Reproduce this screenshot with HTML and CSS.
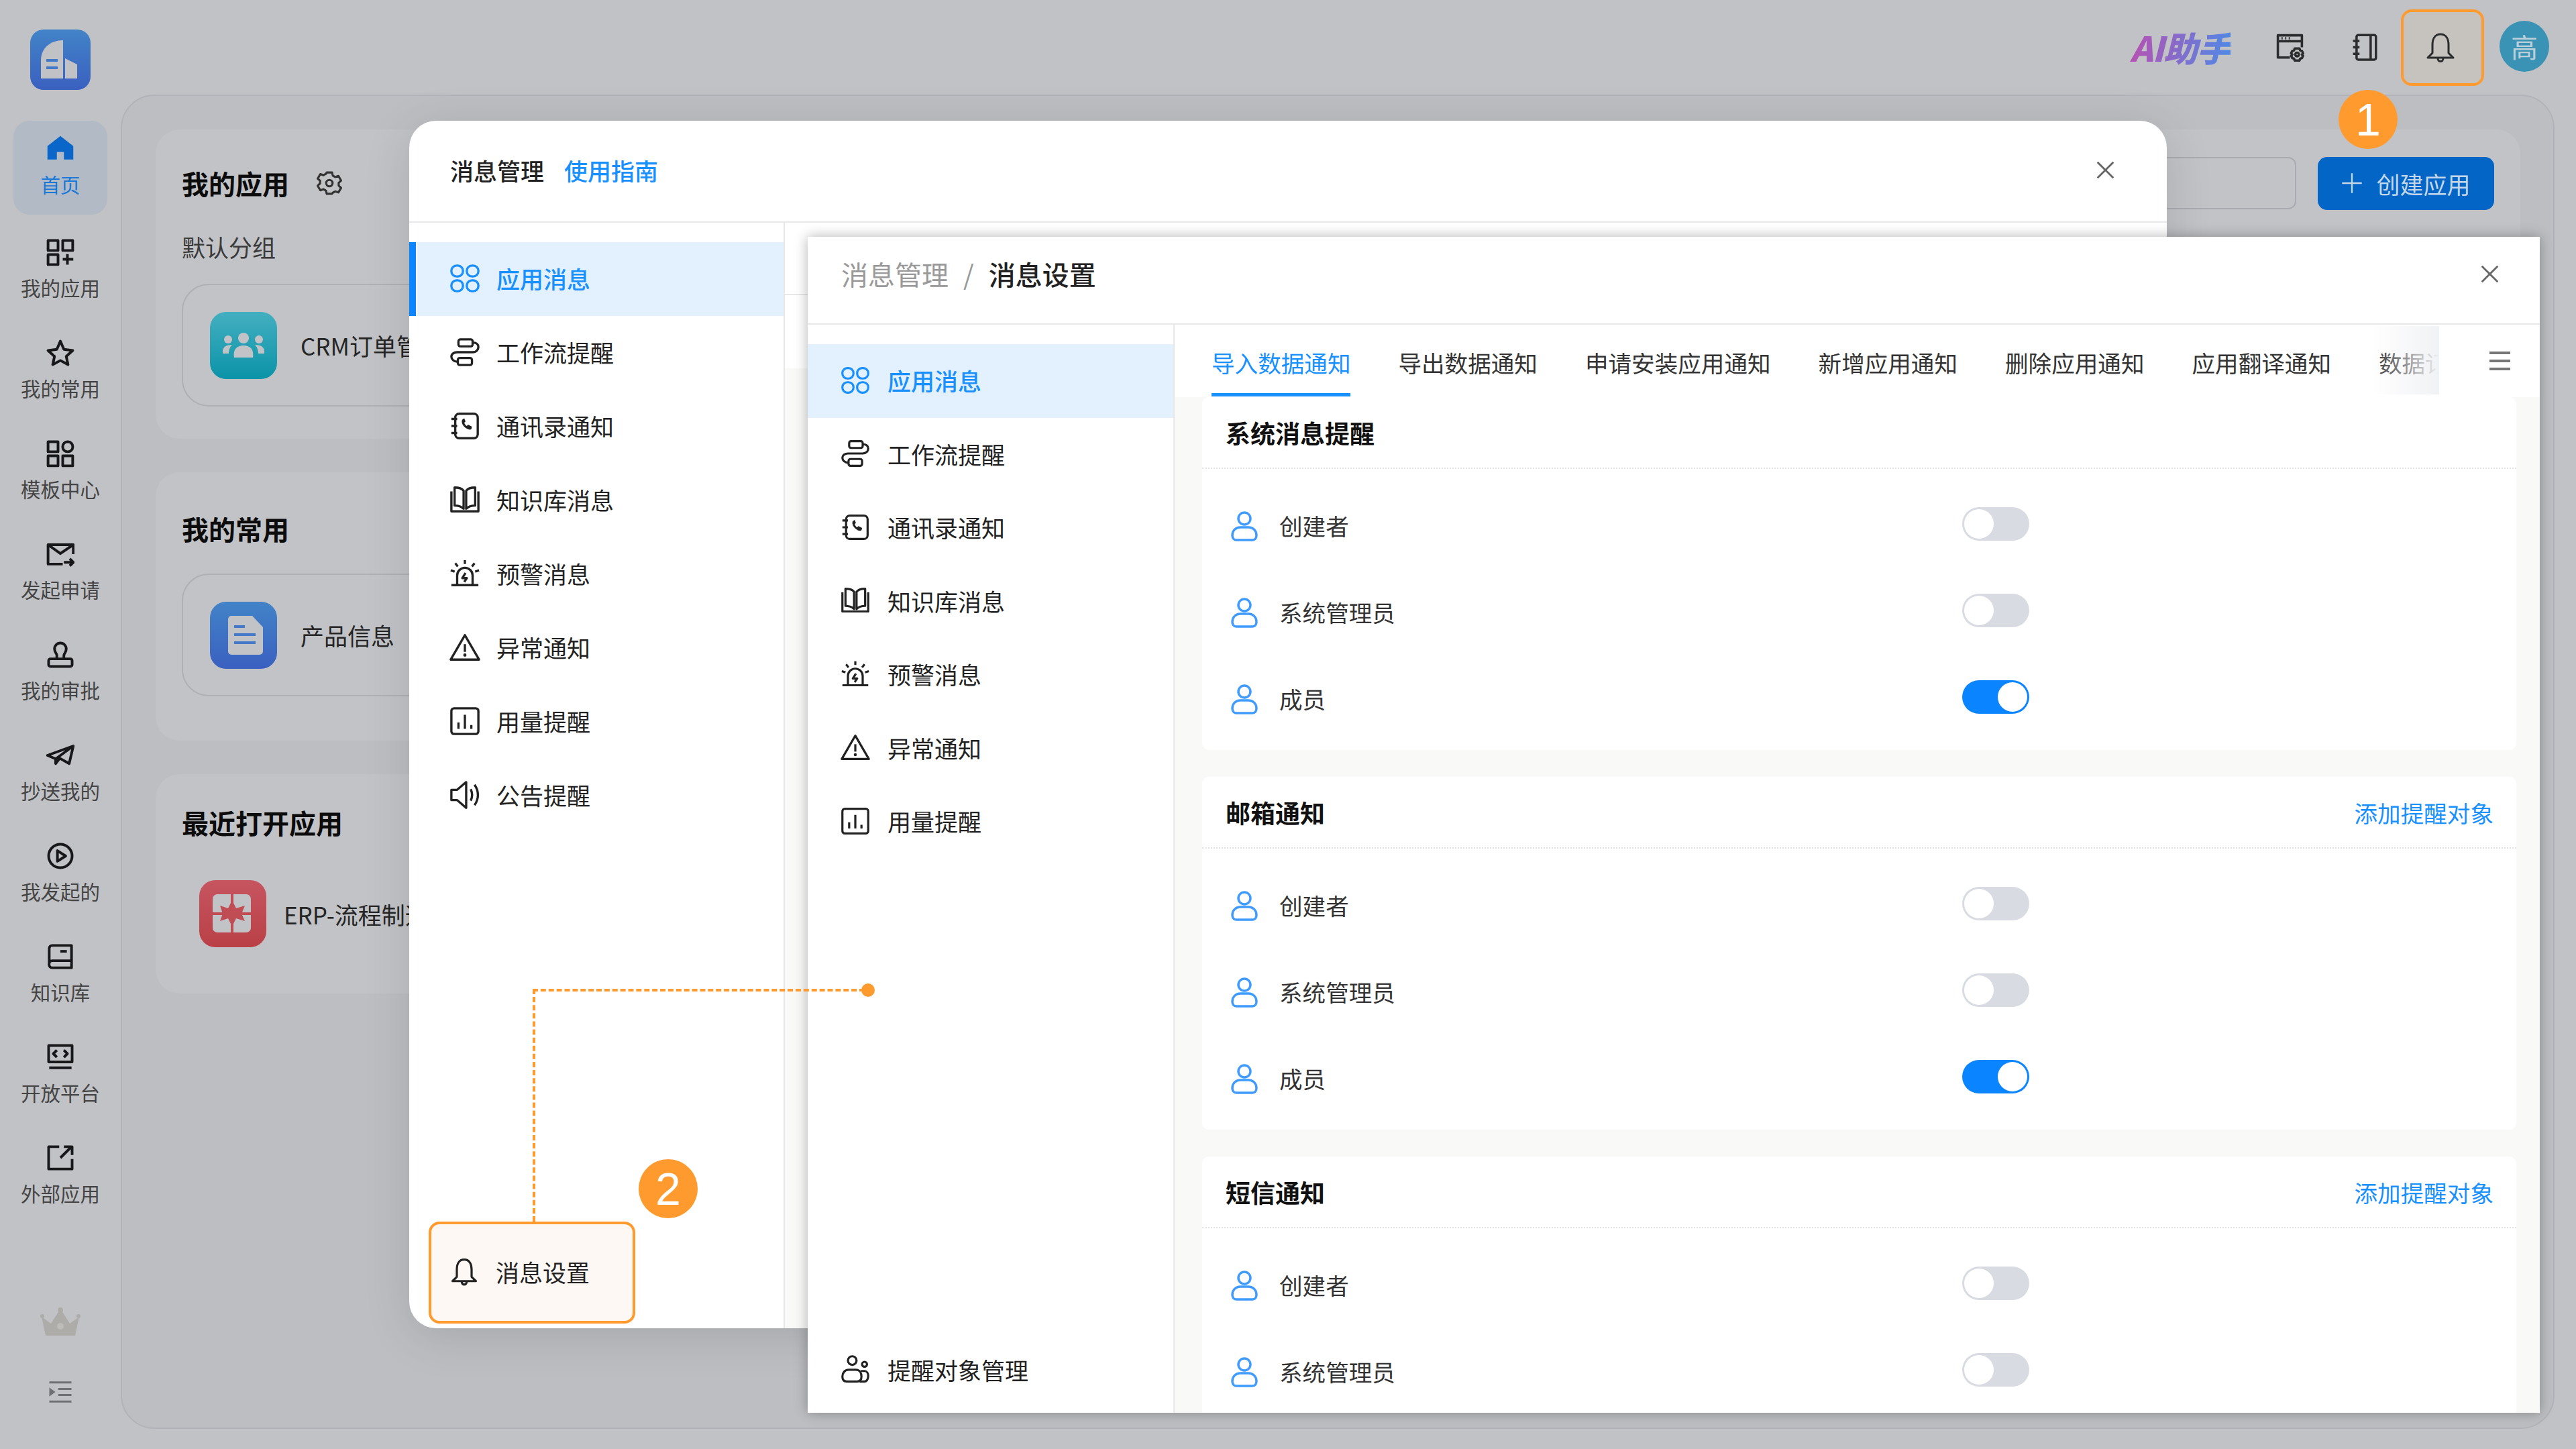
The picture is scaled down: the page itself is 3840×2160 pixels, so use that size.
FILE: index.html
```html
<!DOCTYPE html>
<html lang="zh-CN">
<head>
    <meta charset="UTF-8">
    <title>消息管理</title>
    <link rel="stylesheet" href="styles.css">
</head>
<body>
    <svg class="sprite" xmlns="http://www.w3.org/2000/svg">
        <symbol id="i-apps" viewBox="0 0 48 48"><rect x="3" y="4" width="18" height="17" rx="8"/><rect x="27" y="4" width="18" height="17" rx="8"/><rect x="3" y="27" width="18" height="17" rx="8"/><rect x="27" y="27" width="18" height="17" rx="8"/></symbol>
        <symbol id="i-flow" viewBox="0 0 48 48"><rect x="14" y="4" width="22" height="11" rx="3"/><path d="M36 9c6 0 9 3 9 7s-3 8-9 8H12c-5 0-9 3-9 7s4 8 10 8"/><rect x="13" y="33" width="22" height="11" rx="3"/></symbol>
        <symbol id="i-contact" viewBox="0 0 48 48"><rect x="9" y="5" width="35" height="38" rx="6"/><path d="M3 13h9M3 24h9M3 35h9"/><path class="solid" d="M20 14c-2 3 0 8 3 11s8 6 11 4l1-4-6-3-2 2c-2-1-3-3-4-5l2-2-2-5z"/></symbol>
        <symbol id="i-book" viewBox="0 0 48 48"><path d="M3 11v31h42V11"/><path d="M8 5c5 0 11 1 14 5v28c-3-3-9-5-14-5z"/><path d="M40 5c-5 0-11 1-14 5v28c3-3 9-5 14-5z"/></symbol>
        <symbol id="i-alarm" viewBox="0 0 48 48"><path d="M12 42V27a12 12 0 0 1 24 0v15M3 42h42"/><path d="M25 23l-5 8h7l-4 6"/><path d="M24 3v6M9 8l4 5M39 8l-4 5M2 19l6 2M46 19l-6 2"/></symbol>
        <symbol id="i-warn" viewBox="0 0 48 48"><path d="M24 5L2 43h44z"/><path d="M24 19v12"/><circle class="solid" cx="24" cy="36" r="2.500"/></symbol>
        <symbol id="i-usage" viewBox="0 0 48 48"><rect x="3" y="4" width="42" height="40" rx="4"/><path d="M14 36v-10M24 36V14M34 36v-6"/></symbol>
        <symbol id="i-speaker" viewBox="0 0 48 48"><path d="M3 16v16h9l14 12V4L12 16z"/><path d="M33 15c3 6 3 12 0 18M39 8c7 10 7 22 0 32"/></symbol>
        <symbol id="i-bell" viewBox="0 0 48 48"><path d="M24 4c-9 0-12 8-12 16v12l-7 7h38l-7-7V20c0-8-3-16-12-16z"/><path d="M20 40c0 6 8 6 8 0"/></symbol>
        <symbol id="i-user" viewBox="4 0 40 46"><circle cx="24" cy="12" r="9"/><path d="M6 37c0-7 5-12 12-12h12c7 0 12 5 12 12 0 4-2 7-6 7H12c-4 0-6-3-6-7z"/></symbol>
        <symbol id="i-target" viewBox="0 0 48 48"><circle cx="19" cy="10" r="7"/><circle cx="39" cy="16" r="4"/><path d="M3 36c0-6 4-11 10-11h12c6 0 9 5 9 11 0 5-2 8-7 8H10c-5 0-7-3-7-8z"/><path d="M33 27h6c4 0 6 4 6 8s-2 9-6 9h-8"/></symbol>
        <symbol id="i-close" viewBox="0 0 48 48"><path d="M3 3l42 42M45 3L3 45"/></symbol>
        <symbol id="i-gear" viewBox="0 0 48 48"><path d="M19 4h10l1.500 6 4.500 2.500 6-2 5 8.500-4.500 4.500v5l4.500 4.500-5 8.500-6-2-4.500 2.500L29 44H19l-1.500-6-4.500-2.500-6 2-5-8.500 4.500-4.500v-5L2 15.500l5-8.500 6 2 4.500-2.500z"/><circle cx="24" cy="24" r="6"/></symbol>
        <symbol id="i-home" viewBox="0 0 48 48"><path class="solid" d="M24 2L2 19v23h16V29h12v13h16V19z"/></symbol>
        <symbol id="i-myapps" viewBox="0 0 48 48"><rect x="3" y="4" width="17" height="17"/><rect x="28" y="4" width="17" height="17"/><rect x="3" y="28" width="17" height="17"/><path d="M36 27v18M28 36h18"/></symbol>
        <symbol id="i-star" viewBox="0 0 48 48"><path d="M24 4l6 14 15 2-11 10 3 14-13-7-13 7 3-14L3 20l15-2z"/></symbol>
        <symbol id="i-grid" viewBox="0 0 48 48"><rect x="3" y="4" width="17" height="17"/><rect x="28" y="4" width="17" height="17" rx="8"/><rect x="3" y="28" width="17" height="17"/><rect x="28" y="28" width="17" height="17"/></symbol>
        <symbol id="i-mail" viewBox="0 0 48 48"><path d="M46 24V8H3v33h25"/><path d="M3 8l21 15L46 8"/><path d="M30 38h16M40 32l6 6-6 6"/></symbol>
        <symbol id="i-stamp" viewBox="0 0 48 48"><path d="M18 31v-6c0-3-4-5-4-11a10 10 0 0 1 20 0c0 6-4 8-4 11v6"/><rect x="4" y="31" width="40" height="13" rx="3"/></symbol>
        <symbol id="i-plane" viewBox="0 0 48 48"><path d="M46 8L2 24l14 6 30-22-7 30-16-9-7 9v-8"/></symbol>
        <symbol id="i-play" viewBox="0 0 48 48"><circle cx="24" cy="24" r="20"/><path d="M19 15v18l14-9z"/></symbol>
        <symbol id="i-kb" viewBox="0 0 48 48"><path d="M5 35V10a5 5 0 0 1 5-5h33v38H10c-7 0-7-12 0-12h33"/><path d="M24 15h11"/></symbol>
        <symbol id="i-code" viewBox="0 0 48 48"><rect x="4" y="4" width="40" height="28"/><path d="M18 12l-6 6 6 6M30 12l6 6-6 6"/><path d="M5 42h38"/></symbol>
        <symbol id="i-link" viewBox="0 0 48 48"><path d="M22 5H4v38h40V26"/><path d="M24 24L42 6M30 5h14v14"/></symbol>
        <symbol id="i-indent" viewBox="0 0 48 48"><path d="M2 5h44M20 18h26M20 30h26M2 43h44"/><path class="solid" d="M2 15l12 9-12 9z"/></symbol>
        <symbol id="i-browser" viewBox="0 0 48 48"><path d="M24 41H4V4h40v20M4 14h40"/><path d="M10 9h2M16 9h2M22 9h2"/><circle cx="36" cy="36" r="3"/><path d="M32 26h8l1 3 3 1 2 4-2 2 2 2-2 4-3 1-1 3h-8l-1-3-3-1-2-4 2-2-2-2 2-4 3-1z"/></symbol>
        <symbol id="i-notebook" viewBox="0 0 48 48"><rect x="9" y="3" width="33" height="42" rx="3"/><path d="M33 3v42M3 13h11M3 24h11M3 35h11"/></symbol>
        <symbol id="i-plus" viewBox="0 0 48 48"><path d="M24 2v44M2 24h44"/></symbol>
    </svg>

    <div class="page">
        <aside class="sidebar">
            <div class="logo">
                <svg viewBox="0 0 90 90"><path d="M16 73V46c0-18 14-30 33-30v57z" fill="#c1c2c6"/><path d="M52 43l18 9v21H52z" fill="#c1c2c6"/><path d="M24 46h17M24 57h17" stroke="#4478c8" stroke-width="4"/></svg>
            </div>
            <nav class="side-nav">
                <a class="side-item active"><svg class="ico"><use href="#i-home"/></svg><span>首页</span></a>
                <a class="side-item"><svg class="ico"><use href="#i-myapps"/></svg><span>我的应用</span></a>
                <a class="side-item"><svg class="ico"><use href="#i-star"/></svg><span>我的常用</span></a>
                <a class="side-item"><svg class="ico"><use href="#i-grid"/></svg><span>模板中心</span></a>
                <a class="side-item"><svg class="ico"><use href="#i-mail"/></svg><span>发起申请</span></a>
                <a class="side-item"><svg class="ico"><use href="#i-stamp"/></svg><span>我的审批</span></a>
                <a class="side-item"><svg class="ico"><use href="#i-plane"/></svg><span>抄送我的</span></a>
                <a class="side-item"><svg class="ico"><use href="#i-play"/></svg><span>我发起的</span></a>
                <a class="side-item"><svg class="ico"><use href="#i-kb"/></svg><span>知识库</span></a>
                <a class="side-item"><svg class="ico"><use href="#i-code"/></svg><span>开放平台</span></a>
                <a class="side-item"><svg class="ico"><use href="#i-link"/></svg><span>外部应用</span></a>
            </nav>
            <div class="side-bottom">
                <svg class="crown" viewBox="0 0 60 50"><path d="M8 44L2 16l14 10L30 4l14 22 14-10-6 28z" fill="#aeaca8"/><circle cx="30" cy="6" r="4" fill="#aeaca8"/><circle cx="3" cy="15" r="3" fill="#aeaca8"/><circle cx="57" cy="15" r="3" fill="#aeaca8"/><circle cx="30" cy="30" r="5" fill="#bdbcb9"/></svg>
                <svg class="ico indent"><use href="#i-indent"/></svg>
            </div>
        </aside>

        <div class="main">
            <header class="topbar">
                <span class="ai-text">AI助手</span>
                <svg class="ico top-browser"><use href="#i-browser"/></svg>
                <svg class="ico top-book"><use href="#i-notebook"/></svg>
                <div class="top-bell"><svg class="ico"><use href="#i-bell"/></svg></div>
                <div class="avatar">高</div>
            </header>

            <section class="panel">
                <div class="card card-apps">
                    <div class="card-head">
                        <h2>我的应用</h2>
                        <svg class="ico gear"><use href="#i-gear"/></svg>
                        <div class="search"></div>
                        <button class="create-btn"><svg class="ico"><use href="#i-plus"/></svg>创建应用</button>
                    </div>
                    <div class="group-name">默认分组</div>
                    <div class="tile">
                        <div class="tile-icon teal">
                            <svg viewBox="0 0 100 100"><circle cx="50" cy="39" r="8"/><circle cx="27" cy="41" r="6"/><circle cx="73" cy="41" r="6"/><path d="M36 68c-2-12 4-18 14-18s16 6 14 18zM19 62c-1-10 5-13 14-13-3 3-5 7-5 13zM81 62c1-10-5-13-14-13 3 3 5 7 5 13z"/></svg>
                        </div>
                        <span>CRM订单管理</span>
                    </div>
                </div>
                <div class="card card-fav">
                    <h2>我的常用</h2>
                    <div class="tile">
                        <div class="tile-icon blue">
                            <svg viewBox="0 0 100 100"><path d="M27 26a5 5 0 0 1 5-5h31l16 17v36a5 5 0 0 1-5 5H32a5 5 0 0 1-5-5z"/><path d="M36 37h16M36 49h32M36 61h32" stroke="#4478c8" stroke-width="4"/></svg>
                        </div>
                        <span>产品信息</span>
                    </div>
                </div>
                <div class="card card-recent">
                    <h2>最近打开应用</h2>
                    <div class="tile plain">
                        <div class="tile-icon red">
                            <svg viewBox="0 0 100 100"><rect x="20" y="21" width="57" height="57" rx="7"/><path d="M49 21v57M20 50h57" stroke="#c04c54" stroke-width="4"/><path d="M49 30l6 12 13-4-5 12 5 11-13-4-6 12-6-12-12 4 4-11-4-12 12 4z" fill="#c04c54"/></svg>
                        </div>
                        <span>ERP-流程制造</span>
                    </div>
                </div>
            </section>
        </div>

        <div class="modal modal-manage">
            <div class="modal-head">
                <span class="manage-title">消息管理</span>
                <a class="guide-link">使用指南</a>
                <svg class="ico close"><use href="#i-close"/></svg>
            </div>
            <div class="modal-body">
                <nav class="msg-nav">
                    <a class="msg-item active"><svg class="ico"><use href="#i-apps"/></svg>应用消息</a>
                    <a class="msg-item"><svg class="ico"><use href="#i-flow"/></svg>工作流提醒</a>
                    <a class="msg-item"><svg class="ico"><use href="#i-contact"/></svg>通讯录通知</a>
                    <a class="msg-item"><svg class="ico"><use href="#i-book"/></svg>知识库消息</a>
                    <a class="msg-item"><svg class="ico"><use href="#i-alarm"/></svg>预警消息</a>
                    <a class="msg-item"><svg class="ico"><use href="#i-warn"/></svg>异常通知</a>
                    <a class="msg-item"><svg class="ico"><use href="#i-usage"/></svg>用量提醒</a>
                    <a class="msg-item"><svg class="ico"><use href="#i-speaker"/></svg>公告提醒</a>
                    <a class="msg-settings"><svg class="ico"><use href="#i-bell"/></svg>消息设置</a>
                </nav>
                <div class="manage-rest"></div>
            </div>
        </div>

        <div class="modal modal-settings">
            <div class="modal-head">
                <span class="crumb-parent">消息管理</span>
                <span class="crumb-sep">/</span>
                <span class="crumb-current">消息设置</span>
                <svg class="ico close"><use href="#i-close"/></svg>
            </div>
            <div class="modal-body">
                <nav class="msg-nav">
                    <a class="msg-item active"><svg class="ico"><use href="#i-apps"/></svg>应用消息</a>
                    <a class="msg-item"><svg class="ico"><use href="#i-flow"/></svg>工作流提醒</a>
                    <a class="msg-item"><svg class="ico"><use href="#i-contact"/></svg>通讯录通知</a>
                    <a class="msg-item"><svg class="ico"><use href="#i-book"/></svg>知识库消息</a>
                    <a class="msg-item"><svg class="ico"><use href="#i-alarm"/></svg>预警消息</a>
                    <a class="msg-item"><svg class="ico"><use href="#i-warn"/></svg>异常通知</a>
                    <a class="msg-item"><svg class="ico"><use href="#i-usage"/></svg>用量提醒</a>
                    <a class="msg-item target-item"><svg class="ico"><use href="#i-target"/></svg>提醒对象管理</a>
                </nav>
                <div class="settings-content">
                    <div class="tabs-bar">
                        <div class="tabs">
                            <a class="tab active">导入数据通知</a>
                            <a class="tab">导出数据通知</a>
                            <a class="tab">申请安装应用通知</a>
                            <a class="tab">新增应用通知</a>
                            <a class="tab">删除应用通知</a>
                            <a class="tab">应用翻译通知</a>
                            <a class="tab">数据订阅通知</a>
                        </div>
                        <div class="tabs-more"><span></span><span></span><span></span></div>
                    </div>
                    <div class="sections">
                        <section class="notice">
                            <div class="notice-head"><h3>系统消息提醒</h3></div>
                            <div class="rows">
                                <div class="row"><svg class="ico"><use href="#i-user"/></svg><span class="row-name">创建者</span><i class="toggle"></i></div>
                                <div class="row"><svg class="ico"><use href="#i-user"/></svg><span class="row-name">系统管理员</span><i class="toggle"></i></div>
                                <div class="row"><svg class="ico"><use href="#i-user"/></svg><span class="row-name">成员</span><i class="toggle on"></i></div>
                            </div>
                        </section>
                        <section class="notice">
                            <div class="notice-head"><h3>邮箱通知</h3><a class="add-link">添加提醒对象</a></div>
                            <div class="rows">
                                <div class="row"><svg class="ico"><use href="#i-user"/></svg><span class="row-name">创建者</span><i class="toggle"></i></div>
                                <div class="row"><svg class="ico"><use href="#i-user"/></svg><span class="row-name">系统管理员</span><i class="toggle"></i></div>
                                <div class="row"><svg class="ico"><use href="#i-user"/></svg><span class="row-name">成员</span><i class="toggle on"></i></div>
                            </div>
                        </section>
                        <section class="notice">
                            <div class="notice-head"><h3>短信通知</h3><a class="add-link">添加提醒对象</a></div>
                            <div class="rows">
                                <div class="row"><svg class="ico"><use href="#i-user"/></svg><span class="row-name">创建者</span><i class="toggle"></i></div>
                                <div class="row"><svg class="ico"><use href="#i-user"/></svg><span class="row-name">系统管理员</span><i class="toggle"></i></div>
                            </div>
                        </section>
                    </div>
                </div>
            </div>
        </div>

        <div class="connector"></div>
        <div class="connector-dot"></div>
        <div class="step step-one">1</div>
        <div class="step step-two">2</div>
    </div>
</body>
</html>
```

FILE: styles.css
```css
* {
    box-sizing: border-box;
}

body {
    margin: 0;
    font-family: "Noto Sans CJK SC", "Noto Sans", sans-serif;
    color: #222;
}

h2, h3 {
    margin: 0;
}

.sprite {
    display: none;
}

.ico {
    fill: none;
    stroke: currentColor;
    stroke-width: 4;
    stroke-linejoin: round;
    flex-shrink: 0;
}

.solid {
    fill: currentColor;
    stroke: none;
}

.page {
    position: relative;
    display: flex;
    width: 3840px;
    height: 2160px;
    overflow: hidden;
    background-color: #c1c2c6;
}

/* sidebar */
.sidebar {
    display: flex;
    flex-direction: column;
    align-items: center;
    width: 180px;
    padding-top: 44px;
}

.logo {
    width: 90px;
    height: 90px;
    margin-bottom: 46px;
    border-radius: 20px;
    background: linear-gradient(#4283c8, #3a60c0);
}

.logo svg {
    display: block;
}

.side-nav {
    display: flex;
    flex-direction: column;
    gap: 10px;
    width: 140px;
}

.side-item {
    display: flex;
    flex-direction: column;
    align-items: center;
    height: 140px;
    padding-top: 21px;
    font-size: 29.500px;
    line-height: 42px;
    color: #444;
}

.side-item .ico {
    width: 42px;
    height: 42px;
    margin-bottom: 10px;
    color: #18181a;
    stroke-width: 4.500;
}

.side-item.active {
    margin-bottom: 4px;
    height: 140px;
    border-radius: 24px;
    background-color: #b1bac5;
    color: #1a78d8;
}

.side-item.active .ico {
    color: #0a66c8;
}

.side-bottom {
    display: flex;
    flex-direction: column;
    align-items: center;
    margin-top: auto;
    padding-bottom: 67px;
}

.crown {
    width: 60px;
    height: 50px;
    margin-bottom: 60px;
}

.side-bottom .indent {
    width: 40px;
    height: 36px;
    color: #6f7074;
    stroke-width: 4;
}

/* main area behind the dialogs */
.main {
    flex: 1;
    display: flex;
    flex-direction: column;
    padding: 0 32px 30px 0;
}

.topbar {
    display: flex;
    align-items: center;
    justify-content: flex-end;
    flex-shrink: 0;
    height: 141px;
    padding-right: 8px;
}

.ai-text {
    margin-right: 67px;
    margin-bottom: 2px;
    font-size: 51px;
    font-weight: 900;
    font-style: italic;
    line-height: 60px;
    letter-spacing: -1px;
    background: linear-gradient(100deg, #bb4fb0, #4d8ae6);
    -webkit-background-clip: text;
    background-clip: text;
    color: transparent;
}

.topbar .ico {
    color: #2b2c2e;
}

.top-browser {
    width: 43px;
    height: 43px;
    margin-right: 70px;
}

.top-book {
    width: 42px;
    height: 43px;
    margin-right: 32px;
}

.top-bell {
    display: flex;
    align-items: center;
    justify-content: center;
    width: 124px;
    height: 114px;
    margin-right: 23px;
    padding-right: 6px;
    border: 4px solid #ff9a2e;
    border-radius: 16px;
    background-color: #c6c3bf;
}

.top-bell .ico {
    width: 48px;
    height: 48px;
    stroke-width: 3;
}

.avatar {
    width: 74px;
    height: 76px;
    margin-bottom: 3px;
    border-radius: 50%;
    background-color: #3a92b5;
    color: #bcd0da;
    font-size: 40px;
    line-height: 76px;
    text-align: center;
}

.panel {
    flex: 1;
    display: flex;
    flex-direction: column;
    gap: 50px;
    padding: 50px 49px 0 50px;
    border: 2px solid #b2b3b8;
    border-radius: 50px;
    background-color: #bdbec2;
}

.card {
    padding: 0 39px;
    border-radius: 36px;
    background-color: #c2c3c7;
}

.card h2 {
    font-size: 40px;
    line-height: 60px;
    color: #0c0c0c;
}

.card-apps {
    padding-top: 40px;
    padding-bottom: 48px;
}

.card-fav {
    padding-top: 54px;
    padding-bottom: 66px;
}

.card-recent {
    padding-top: 42px;
    padding-bottom: 69px;
}

.card-head {
    display: flex;
    align-items: center;
    height: 80px;
}

.gear {
    width: 38px;
    height: 38px;
    margin-left: 41px;
    color: #333;
}

.search {
    width: 500px;
    height: 78px;
    margin-left: auto;
    border: 2px solid #a9abb1;
    border-radius: 12px;
}

.create-btn {
    display: flex;
    align-items: center;
    justify-content: center;
    gap: 20px;
    width: 263px;
    height: 79px;
    margin-left: 32px;
    border: none;
    border-radius: 14px;
    background-color: #0366c6;
    color: #c6d7ea;
    font-family: inherit;
    font-size: 35px;
}

.create-btn .ico {
    width: 32px;
    height: 32px;
    stroke-width: 3.500;
}

.group-name {
    margin: 31px 0;
    font-size: 35px;
    line-height: 48px;
    color: #3a3a3a;
}

.card-fav .tile {
    margin-top: 37px;
}

.card-recent .tile {
    margin-top: 56px;
}

.tile {
    display: flex;
    align-items: center;
    gap: 35px;
    width: 560px;
    height: 183px;
    padding-left: 40px;
    border: 2px solid #aeb0b4;
    border-radius: 40px;
    font-size: 35px;
    white-space: nowrap;
    color: #252525;
}

.tile.plain {
    gap: 26px;
    height: 100px;
    padding-left: 26px;
    border: none;
}

.tile-icon {
    width: 100px;
    height: 100px;
    flex-shrink: 0;
    border-radius: 24px;
}

.tile-icon svg {
    display: block;
    fill: #c2c3c7;
}

.teal {
    background: linear-gradient(#43afc0, #0b93a8);
}

.blue {
    background: linear-gradient(#4283c8, #3a60c0);
}

.red {
    background: linear-gradient(#c65560, #ba4046);
}

/* dialogs */
.modal {
    position: absolute;
    display: flex;
    flex-direction: column;
    background-color: #fff;
}

.modal-manage {
    left: 610px;
    top: 180px;
    width: 2620px;
    height: 1800px;
    border-radius: 40px;
    box-shadow: 0 12px 70px rgba(0, 0, 0, .12);
    overflow: hidden;
}

.modal-settings {
    left: 1204px;
    top: 353px;
    width: 2582px;
    height: 1753px;
    box-shadow: 0 0 18px rgba(0, 0, 0, .3);
}

.modal-head {
    display: flex;
    align-items: center;
    flex-shrink: 0;
    border-bottom: 2px solid #e8e8e8;
}

.modal-manage .modal-head {
    height: 152px;
    padding: 0 78px 3px 61px;
}

.modal-settings .modal-head {
    height: 131px;
    padding: 0 61px 19px 50px;
}

.manage-title {
    font-size: 35px;
    font-weight: 500;
    color: #222;
}

.guide-link {
    margin-left: 30px;
    font-size: 35px;
    font-weight: 500;
    color: #1890ff;
}

.close {
    width: 27px;
    height: 27px;
    margin-left: auto;
    color: #666;
    stroke-width: 5;
}

.crumb-parent {
    font-size: 40px;
    color: #999;
}

.crumb-sep {
    margin: 0 22px;
    font-size: 40px;
    color: #999;
}

.crumb-current {
    font-size: 40px;
    font-weight: 500;
    color: #222;
}

.modal-body {
    flex: 1;
    display: flex;
    min-height: 0;
}

.msg-nav {
    display: flex;
    flex-direction: column;
    flex-shrink: 0;
    padding-top: 29px;
    border-right: 2px solid #e8e8e8;
}

.modal-manage .msg-nav {
    width: 560px;
}

.modal-settings .msg-nav {
    width: 547px;
}

.msg-item {
    position: relative;
    display: flex;
    align-items: center;
    gap: 26px;
    height: 110px;
    flex-shrink: 0;
    padding: 0 0 3px 60px;
    font-size: 35px;
    color: #222;
}

.modal-manage .msg-item {
    gap: 24px;
}

.modal-settings .msg-item {
    height: 109.500px;
    padding: 0 0 2px 49px;
}

.msg-item .ico {
    width: 46px;
    height: 46px;
    stroke-width: 3.500;
}

.modal-settings .msg-item .ico {
    width: 44px;
    height: 44px;
}

.msg-item.active {
    background-color: #e3f1fe;
    color: #1890ff;
    font-weight: 500;
}

.modal-manage .msg-item.active::before {
    content: "";
    position: absolute;
    left: 0;
    top: 0;
    bottom: 0;
    width: 2px;
    border-left: 10px solid #0a84ff;
    background-color: #fff;
}

.msg-settings {
    display: flex;
    align-items: center;
    gap: 25px;
    width: 308px;
    height: 152px;
    margin: auto 0 7px 29px;
    padding: 0 0 3px 27px;
    border: 4px solid #ff9a2e;
    border-radius: 16px;
    background-color: #fdf8f3;
    font-size: 35px;
    color: #222;
}

.msg-settings .ico {
    width: 44px;
    height: 46px;
    stroke-width: 3.500;
}

.modal-settings .target-item {
    margin: auto 0 9px;
}

.manage-rest {
    flex: 1;
    background: linear-gradient(#fff 106px, #e8e8e8 106px, #e8e8e8 108px, #fff 108px, #fff 217px, #f9f9f8 217px);
}

.settings-content {
    flex: 1;
    display: flex;
    flex-direction: column;
    min-width: 0;
    overflow: hidden;
    background-color: #f9f9f8;
}

.tabs-bar {
    display: flex;
    flex-shrink: 0;
    height: 108px;
    background-color: #fff;
}

.tabs {
    position: relative;
    display: flex;
    gap: 71px;
    width: 1885px;
    padding-left: 55px;
    overflow: hidden;
}

.tabs::after {
    content: "";
    position: absolute;
    right: 0;
    top: 2px;
    bottom: 4px;
    width: 100px;
    background: linear-gradient(90deg, rgba(241, 242, 245, 0), #f1f2f5);
}

.tab {
    flex-shrink: 0;
    height: 108px;
    padding-top: 31px;
    font-size: 34.600px;
    line-height: 50px;
    white-space: nowrap;
    color: #333;
}

.tab.active {
    border-bottom: 5px solid #1890ff;
    height: 107px;
    color: #1890ff;
}

.tabs-more {
    display: flex;
    flex-direction: column;
    justify-content: center;
    gap: 8px;
    padding-left: 75px;
}

.tabs-more span {
    display: block;
    width: 31px;
    height: 4px;
    background-color: #777;
}

.sections {
    display: flex;
    flex-direction: column;
    flex-shrink: 0;
    gap: 40px;
    padding: 0 35px 0 41px;
}

.notice {
    flex-shrink: 0;
    height: 526px;
    border-radius: 10px;
    background-color: #fff;
}

.notice-head {
    display: flex;
    align-items: center;
    justify-content: space-between;
    height: 107px;
    padding: 0 34px 0 35px;
    border-bottom: 2px dotted #e2e2e2;
}

.notice-head h3 {
    font-size: 37px;
    font-weight: 700;
    color: #111;
}

.add-link {
    font-size: 34.600px;
    color: #1890ff;
}

.rows {
    padding-top: 20px;
}

.row {
    display: flex;
    align-items: center;
    height: 129px;
    padding-left: 42px;
}

.row .ico {
    width: 42px;
    height: 46px;
    margin-right: 31px;
    color: #3f9bff;
    stroke-width: 3.500;
}

.row-name {
    width: 1018px;
    margin-bottom: 2px;
    font-size: 34.600px;
    color: #333;
}

.toggle {
    position: relative;
    display: block;
    width: 100px;
    height: 50px;
    margin-top: -6px;
    border-radius: 25px;
    background-color: #d8dbe2;
}

.toggle::after {
    content: "";
    position: absolute;
    left: 3px;
    top: 3px;
    width: 44px;
    height: 44px;
    border-radius: 50%;
    background-color: #fff;
}

.toggle.on {
    background-color: #0a84ff;
}

.toggle.on::after {
    left: 53px;
}

/* guide marks */
.connector {
    position: absolute;
    left: 794px;
    top: 1474px;
    width: 495px;
    height: 347px;
    border-top: 4px dashed #ff9a2e;
    border-left: 4px dashed #ff9a2e;
}

.connector-dot {
    position: absolute;
    left: 1284px;
    top: 1466px;
    width: 20px;
    height: 20px;
    border-radius: 50%;
    background-color: #ff9a2e;
}

.step {
    position: absolute;
    width: 88px;
    height: 88px;
    border-radius: 50%;
    background-color: #ff9a2e;
    color: #fff;
    font-family: "Liberation Sans", sans-serif;
    font-size: 68px;
    line-height: 88px;
    text-align: center;
}

.step-one {
    left: 3486px;
    top: 134px;
}

.step-two {
    left: 952px;
    top: 1728px;
}
```
